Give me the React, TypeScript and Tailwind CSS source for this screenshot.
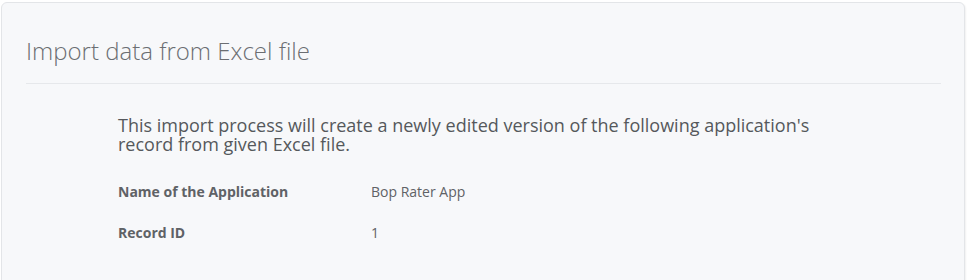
export default function App() {
  return (
    <div className="min-h-[280px] w-[967px] bg-white pt-[2px] pl-[1px] pr-[2px]" style={{ fontFamily: '"Open Sans", sans-serif' }}>
      <div className="h-[290px] rounded-[6px] border border-[#e3e5e8] bg-[#f7f8fa] shadow-[1px_1px_2px_rgba(0,0,0,0.06)]">
        <div className="px-[24px] pt-[32px]">
          <h1 className="text-[24px] font-light leading-[32px] text-[#6b6e72]">Import data from Excel file</h1>
          <div className="mt-[16px] mr-[-1px] h-px bg-[#e6e8eb]" />
        </div>
        <div className="pl-[116px] pt-[32px]">
          <p className="w-[720px] text-[18px] leading-[19px] text-[#55585c]">
            This import process will create a newly edited version of the following application's record from given Excel file.
          </p>
          <div className="mt-[28px] flex items-center text-[14px] leading-[20px] text-[#5f6266]">
            <div className="w-[253px] font-bold">Name of the Application</div>
            <div>Bop Rater App</div>
          </div>
          <div className="mt-[21px] flex items-center text-[14px] leading-[20px] text-[#5f6266]">
            <div className="w-[253px] font-bold">Record ID</div>
            <div>1</div>
          </div>
        </div>
      </div>
    </div>
  );
}
